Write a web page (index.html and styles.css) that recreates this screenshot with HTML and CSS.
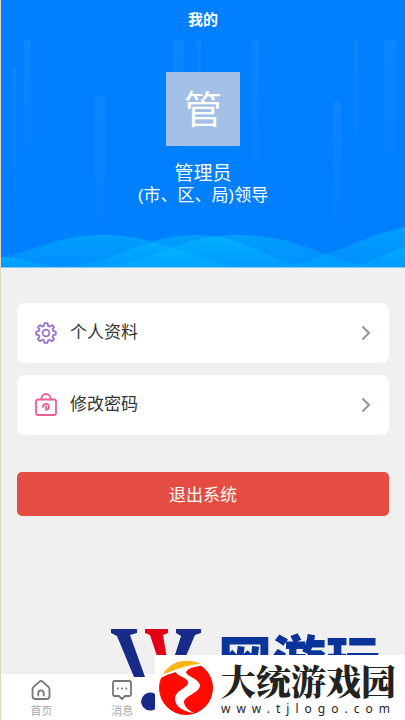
FILE: index.html
```html
<!DOCTYPE html>
<html lang="zh-CN">
<head>
<meta charset="utf-8">
<meta name="viewport" content="width=device-width, initial-scale=1">
<title>我的</title>
<link rel="stylesheet" href="styles.css">
</head>
<body>
<div class="app">
  <header class="hero">
    <svg class="hero-art" viewBox="0 0 404 267" preserveAspectRatio="none" aria-hidden="true">
      <defs>
        <linearGradient id="beam" x1="0" y1="0" x2="0" y2="1"><stop offset="0" stop-color="#fff" stop-opacity=".05"/><stop offset="1" stop-color="#fff" stop-opacity="0"/></linearGradient>
        <linearGradient id="wave" x1="0" y1="0" x2="0" y2="1"><stop offset="0" stop-color="#00c8ff" stop-opacity=".42"/><stop offset="1" stop-color="#00c8ff" stop-opacity=".2"/></linearGradient>
      </defs>
      <g fill="url(#beam)">
        <rect x="23" y="40" width="7" height="140"/><rect x="11" y="67" width="4" height="180"/>
        <rect x="93" y="96" width="12" height="155" rx="5"/><rect x="172" y="40" width="11" height="130"/>
        <rect x="196" y="40" width="4" height="90"/><rect x="251" y="40" width="7" height="150"/>
        <rect x="332" y="101" width="8" height="150" rx="4"/><rect x="353" y="40" width="4" height="120"/><rect x="383" y="40" width="12" height="140"/>
      </g>
      <g fill="url(#wave)">
        <path d="M0 258C45 247 60 235 100 235C155 235 185 256 233 267H0Z"/>
        <path d="M65 267C120 260 145 235 195 235C245 235 260 260 310 267Z"/>
        <path d="M95 267C165 262 170 236 235 235C300 235 320 259 370 267Z"/>
        <path d="M275 267C330 260 350 239 404 227V267Z"/>
        <path d="M345 267C370 263 385 253 404 247V267Z"/>
        <path d="M0 257C20 258 30 263 55 267H0Z"/>
      </g>
    </svg>
    <h1 class="title">我的</h1>
    <div class="avatar">管</div>
    <p class="name">管理员</p>
    <p class="role">(市、区、局)领导</p>
  </header>
  <main class="content">
    <a class="row" href="#profile">
      <svg class="row-icon gear" viewBox="0 0 22 22" aria-hidden="true"><path d="M9.500 1.200h3l.6 2.700 1.600.7 2.400-1.500 2 2-1.500 2.400.7 1.600 2.500.5v3l-2.600.6-.6 1.600 1.500 2.400-2 2-2.400-1.500-1.600.7-.6 2.500h-3l-.6-2.500-1.600-.7-2.400 1.500-2-2 1.500-2.400-.6-1.600-2.600-.6v-3l2.500-.5.7-1.600-1.500-2.400 2-2 2.400 1.500 1.600-.7z"/><circle cx="11" cy="11" r="3.400"/></svg>
      <span class="row-label">个人资料</span>
      <svg class="chevron" viewBox="0 0 10 16" aria-hidden="true"><path d="M1.500 1.500 8 8l-6.500 6.500"/></svg>
    </a>
    <a class="row" href="#password">
      <svg class="row-icon lock" viewBox="0 0 22 24" aria-hidden="true"><rect x="1" y="6.500" width="20" height="15.500" rx="2"/><path d="M6.500 6.500V5.500a4.500 4.500 0 0 1 9 0v1M8 14a3 3 0 1 1 4 2.800M11 13.500v3"/></svg>
      <span class="row-label">修改密码</span>
      <svg class="chevron" viewBox="0 0 10 16" aria-hidden="true"><path d="M1.500 1.500 8 8l-6.500 6.500"/></svg>
    </a>
    <button class="logout" type="button">退出系统</button>
  </main>
  <nav class="tabs">
    <a class="tab" href="#home">
      <svg viewBox="0 0 20 20" aria-hidden="true"><path d="M3 6.500 8.500 1.600q1.500-1.200 3 0L17 6.500q1.500 1.300 1.500 3V16q0 3-3 3h-11q-3 0-3-3V9.500q0-1.700 1.500-3ZM7.300 15.500V13a2.700 2.700 0 0 1 5.400 0v2.500"/></svg>
      <span>首页</span>
    </a>
    <a class="tab" href="#messages">
      <svg viewBox="0 0 20 20" aria-hidden="true"><path d="M2.500 1h15Q19 1 19 2.500v12q0 1.500-1.500 1.500H13l-3 3-3-3H2.500Q1 16 1 14.500v-12Q1 1 2.500 1ZM5.600 8.500h.2M9.900 8.500h.2M14.200 8.500h.2"/></svg>
      <span>消息</span>
    </a>
  </nav>
  <div class="mark" aria-hidden="true">
    <svg viewBox="0 0 94 84"><g fill="#182b88"><path d="M1 1h26v4l-7 2 15 42H24L7 8 1 5Z"/><path d="M66 1h25v4l-6 2-18 42H58L71 8l-5-3Z"/><path d="M48 68v10a9 9 0 1 1-3-12q1 3 3 2Z"/></g><path fill="#e30016" d="M35 1h23v4l-5 2 5 30H50L40 7l-5-2Z"/></svg>
    <span>网游玩</span>
  </div>
  <aside class="brand">
    <svg class="brand-logo" viewBox="0 0 56 56" aria-hidden="true"><circle cx="28" cy="28" r="27" fill="#ff0a00"/><path fill="#fff" d="M2 18C9 4 24-3 43 3l3 2C36 7 30 8 28 12c0 4 13 7 14 13 0 8-16 11-16 17 0 5 6 9 10 11-9-1-19-6-19-14 0-9 14-11 13-17-1-5-12-6-12-10q-8 2-15 6Z"/><path fill="#ffb514" d="M5 14C14 0 31-2 43 4 29 4 16 11 5 14Z"/></svg>
    <div class="brand-text"><strong>大统游戏园</strong><span>www.tjlogo.com</span></div>
  </aside>
</div>
</body>
</html>
```
FILE: styles.css
```css
* { box-sizing: border-box; }
body { margin: 0; background: #f0f0f0; font-family: "Liberation Sans", "Noto Sans CJK SC", sans-serif; color: #333; }
h1, p { margin: 0; }
a { color: inherit; text-decoration: none; }
.app { position: relative; min-height: 100vh; display: flex; flex-direction: column; border-left: 1px solid #e2d5c4; overflow: hidden; }
.hero { position: relative; display: flex; flex-direction: column; align-items: center; padding: 8px 0 60px; background: #0080ff; color: #fff; border-bottom: 1px solid #80ccf5; }
.hero-art { position: absolute; inset: 0; width: 100%; height: 100%; }
.title, .avatar, .name, .role { position: relative; }
.title { font-size: 15px; line-height: 24px; }
.avatar { width: 74px; height: 74px; margin: 40px 0 17px; background: #a3c0e6; font-size: 38px; line-height: 76px; text-align: center; }
.name, .role { line-height: 22px; }
.name { font-size: 19px; }
.role { font-size: 17px; }
.content { flex: 1; display: flex; flex-direction: column; gap: 12px; padding: 35px 16px; }
.row { display: flex; align-items: center; height: 60px; padding: 0 18px; border-radius: 8px; background: #fff; }
.row-icon { width: 22px; height: 24px; fill: none; stroke-width: 1.8; stroke-linecap: round; stroke-linejoin: round; }
.gear { stroke: #9b72cc; }
.lock { stroke: #ee5d9b; }
.row-label { flex: 1; margin-left: 13px; font-size: 17px; line-height: 26px; }
.chevron { width: 10px; height: 16px; fill: none; stroke: #87999f; stroke-width: 2; }
.logout { height: 44px; margin-top: 25px; padding: 0 0 2px; border: 0; border-radius: 5px; background: #e54d42; color: #fff; font: inherit; font-size: 17px; }
.tabs { display: grid; grid-template-columns: repeat(5, 1fr); height: 46px; padding-top: 6px; background: #fff; }
.tab { display: flex; flex-direction: column; align-items: center; gap: 3px; color: #aaa; font-size: 11px; line-height: 16px; }
.tab svg { width: 20px; height: 20px; flex: none; fill: none; stroke: #777; stroke-width: 1.8; stroke-linecap: round; stroke-linejoin: round; }
.mark { position: absolute; left: 109px; bottom: 8px; display: flex; gap: 14px; color: #0b349b; }
.mark svg { width: 94px; height: 84px; }
.mark span { font-size: 54px; line-height: 68px; font-weight: 900; }
.brand { position: absolute; right: 0; bottom: 0; width: 250px; height: 65px; display: flex; align-items: center; gap: 7px; padding-left: 3px; background: #fff; color: #222; }
.brand-logo { width: 56px; height: 56px; flex: none; }
.brand-text { display: flex; flex-direction: column; }
.brand-text strong { font-family: "Noto Serif CJK SC", "Noto Sans CJK SC", serif; font-size: 35px; line-height: 42px; font-weight: 900; }
.brand-text span { font-family: "Noto Sans", sans-serif; font-size: 12px; line-height: 16px; letter-spacing: 6px; }
```
